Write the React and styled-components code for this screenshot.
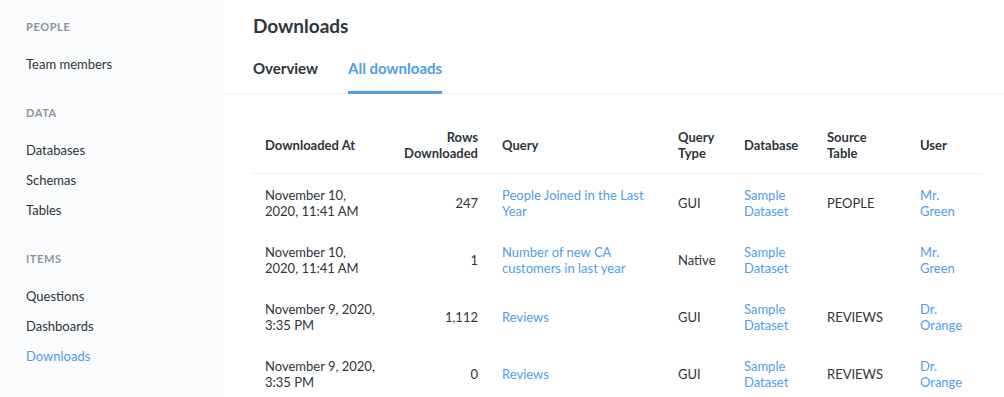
import React from "react";
import styled, { createGlobalStyle } from "styled-components";

const GlobalStyle = createGlobalStyle`
  html, body {
    margin: 0;
    padding: 0;
    background: #ffffff;
    font-family: Lato, "Open Sans", sans-serif;
    color: #2e353b;
    -webkit-font-smoothing: antialiased;
  }
`;

const Page = styled.div`
  display: flex;
  width: 1004px;
  height: 397px;
  overflow: hidden;
`;

const Sidebar = styled.nav`
  width: 224px;
  flex-shrink: 0;
  background: #f9fbfc;
  padding: 20px 0 0 26px;
  box-sizing: border-box;
`;

const Section = styled.div`
  margin-bottom: 20px;
`;

const SectionLabel = styled.div`
  font-size: 11px;
  font-weight: 700;
  letter-spacing: 0.6px;
  text-transform: uppercase;
  color: #8d939e;
  line-height: 14px;
  margin-bottom: 22px;
`;

const NavItem = styled.div`
  font-size: 13px;
  line-height: 16px;
  height: 30px;
  color: ${(p) => (p.$active ? "#509ee3" : "#2e353b")};
`;

const Main = styled.main`
  flex: 1;
  min-width: 0;
`;

const Header = styled.header`
  padding: 14px 0 0 29px;
  border-bottom: 1px solid #f0f0f0;
`;

const Title = styled.h1`
  margin: 0;
  font-size: 19px;
  line-height: 24px;
  font-weight: 700;
  color: #2e353b;
`;

const Tabs = styled.div`
  display: flex;
  gap: 30px;
  margin-top: 20px;
`;

const Tab = styled.div`
  font-size: 15px;
  font-weight: 700;
  line-height: 20px;
  padding-bottom: 13px;
  border-bottom: 3px solid ${(p) => (p.$active ? "#509ee3" : "transparent")};
  color: ${(p) => (p.$active ? "#509ee3" : "#2e353b")};
  margin-bottom: -1px;
`;

const TableWrap = styled.div`
  padding: 22px 0 0 29px;
`;

const Table = styled.table`
  width: 730px;
  table-layout: fixed;
  border-collapse: collapse;
  font-size: 13px;
  line-height: 16px;
`;

const Th = styled.th`
  font-weight: 700;
  color: #2e353b;
  text-align: ${(p) => (p.$right ? "right" : "left")};
  padding: 0 12px;
  height: 57px;
  vertical-align: middle;
  border-bottom: 1px solid #eeeeee;
`;

const Td = styled.td`
  color: ${(p) => (p.$link ? "#509ee3" : "#2e353b")};
  text-align: ${(p) => (p.$right ? "right" : "left")};
  padding: 0 12px;
  height: 57px;
  vertical-align: middle;
`;

const columns = [
  { label: "Downloaded At", width: 134 },
  { label: "Rows Downloaded", width: 103, right: true },
  { label: "Query", width: 176 },
  { label: "Query Type", width: 66 },
  { label: "Database", width: 83 },
  { label: "Source Table", width: 93 },
  { label: "User", width: 75 },
];

const rows = [
  ["November 10, 2020, 11:41 AM", "247", "People Joined in the Last Year", "GUI", "Sample Dataset", "PEOPLE", "Mr. Green"],
  ["November 10, 2020, 11:41 AM", "1", "Number of new CA customers in last year", "Native", "Sample Dataset", "", "Mr. Green"],
  ["November 9, 2020, 3:35 PM", "1,112", "Reviews", "GUI", "Sample Dataset", "REVIEWS", "Dr. Orange"],
  ["November 9, 2020, 3:35 PM", "0", "Reviews", "GUI", "Sample Dataset", "REVIEWS", "Dr. Orange"],
];

const linkCols = [2, 4, 6];

const nav = [
  { label: "People", items: ["Team members"] },
  { label: "Data", items: ["Databases", "Schemas", "Tables"] },
  { label: "Items", items: ["Questions", "Dashboards", "Downloads"] },
];

export default function App() {
  return (
    <>
      <GlobalStyle />
      <Page>
        <Sidebar>
          {nav.map((s) => (
            <Section key={s.label}>
              <SectionLabel>{s.label}</SectionLabel>
              {s.items.map((item) => (
                <NavItem key={item} $active={item === "Downloads"}>
                  {item}
                </NavItem>
              ))}
            </Section>
          ))}
        </Sidebar>
        <Main>
          <Header>
            <Title>Downloads</Title>
            <Tabs>
              <Tab>Overview</Tab>
              <Tab $active>All downloads</Tab>
            </Tabs>
          </Header>
          <TableWrap>
            <Table>
              <colgroup>
                {columns.map((c) => (
                  <col key={c.label} style={{ width: c.width }} />
                ))}
              </colgroup>
              <thead>
                <tr>
                  {columns.map((c) => (
                    <Th key={c.label} $right={c.right}>
                      {c.label}
                    </Th>
                  ))}
                </tr>
              </thead>
              <tbody>
                {rows.map((r, i) => (
                  <tr key={i}>
                    {r.map((cell, j) => (
                      <Td key={j} $right={j === 1} $link={linkCols.includes(j)}>
                        {cell}
                      </Td>
                    ))}
                  </tr>
                ))}
              </tbody>
            </Table>
          </TableWrap>
        </Main>
      </Page>
    </>
  );
}
